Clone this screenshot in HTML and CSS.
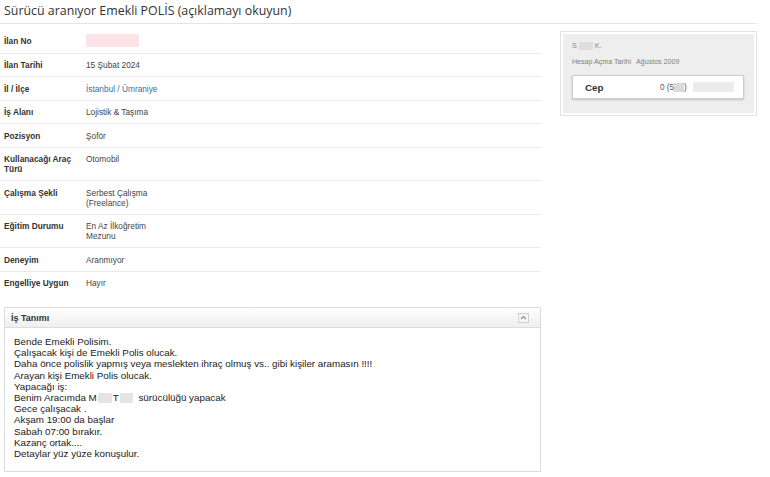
FILE: index.html
```html
<!DOCTYPE html>
<html lang="tr">
<head>
<meta charset="utf-8">
<link rel="stylesheet" href="styles.css">
</head>
<body>
<div class="page">
  <h1 class="title">Sürücü aranıyor Emekli POLİS (açıklamayı okuyun)</h1>
  <div class="content">
    <div class="main">
      <ul class="info">
        <li class="row"><span class="label">İlan No</span><span class="value"><span class="redact-pink"></span></span></li>
        <li class="row"><span class="label">İlan Tarihi</span><span class="value">15 Şubat 2024</span></li>
        <li class="row"><span class="label">İl / İlçe</span><span class="value link">İstanbul / Ümraniye</span></li>
        <li class="row"><span class="label">İş Alanı</span><span class="value">Lojistik &amp; Taşıma</span></li>
        <li class="row"><span class="label">Pozisyon</span><span class="value">Şoför</span></li>
        <li class="row"><span class="label">Kullanacağı Araç Türü</span><span class="value">Otomobil</span></li>
        <li class="row"><span class="label">Çalışma Şekli</span><span class="value">Serbest Çalışma<br>(Freelance)</span></li>
        <li class="row"><span class="label">Eğitim Durumu</span><span class="value">En Az İlkoğretim<br>Mezunu</span></li>
        <li class="row"><span class="label">Deneyim</span><span class="value">Aranmıyor</span></li>
        <li class="row last"><span class="label">Engelliye Uygun</span><span class="value">Hayır</span></li>
      </ul>
      <section class="desc">
        <header class="desc-head">
          <span class="desc-title">İş Tanımı</span>
          <span class="collapse"><svg width="7" height="5" viewBox="0 0 7 5"><path d="M1 4 L3.5 1.5 L6 4" fill="none" stroke="#8a8a8a" stroke-width="1.1"/></svg></span>
        </header>
        <div class="desc-body">
          <p>Bende Emekli Polisim.</p>
          <p>Çalışacak kişi de Emekli Polis olucak.</p>
          <p>Daha önce polislik yapmış veya meslekten ihraç olmuş vs.. gibi kişiler aramasın !!!!</p>
          <p>Arayan kişi Emekli Polis olucak.</p>
          <p>Yapacağı iş:</p>
          <p>Benim Aracımda M<span class="blur b1"></span>T<span class="blur b2"></span> sürücülüğü yapacak</p>
          <p>Gece çalışacak .</p>
          <p>Akşam 19:00 da başlar</p>
          <p>Sabah 07:00 bırakır.</p>
          <p>Kazanç ortak....</p>
          <p>Detaylar yüz yüze konuşulur.</p>
        </div>
      </section>
    </div>
    <aside class="side">
      <div class="side-inner">
        <div class="owner">S<span class="blur b3"></span>K.</div>
        <div class="since"><span>Hesap Açma Tarihi</span><span class="since-val">Ağustos 2009</span></div>
        <div class="phone">
          <span class="phone-label">Cep</span>
          <span class="phone-num">0 (5<span class="blur b4"></span>)</span>
          <span class="blur b5"></span>
        </div>
      </div>
    </aside>
  </div>
</div>
</body>
</html>
```

FILE: styles.css
```css
* { box-sizing: border-box; }
html, body { margin: 0; padding: 0; background: #fff; }
body { font-family: "Liberation Sans", Arial, sans-serif; color: #333; }

.page { width: 757px; }

.title {
  margin: 0;
  padding: 2px 4px 0;
  height: 24px;
  font-family: "Open Sans", "Liberation Sans", sans-serif;
  font-weight: 400;
  font-size: 12.4px;
  line-height: 18px;
  color: #333;
  border-bottom: 1px solid #e4e4e4;
}

.content { display: flex; align-items: flex-start; }

.main { width: 541px; flex: none; }

.info { list-style: none; margin: 5px 0 0; padding: 0; }
.row {
  display: flex;
  padding: 6.5px 0 6px 4px;
  border-bottom: 1px solid #ebebeb;
  font-size: 8.3px;
  line-height: 10px;
}
.row.last { border-bottom: none; }
.label { width: 82px; flex: none; font-weight: 700; color: #333; padding-right: 6px; }
.value { color: #444; }
.link { color: #3f6c9a; }
.redact-pink { display: inline-block; width: 53px; height: 13px; background: #fbe3e7; vertical-align: -3px; margin-top: -2px; }

.desc { margin: 13px 0 0 4px; border: 1px solid #dcdcdc; }
.desc-head {
  display: flex; align-items: center; justify-content: space-between;
  height: 20px; padding: 0 11px 0 6px;
  background: linear-gradient(#fefefe, #efefef);
  border-bottom: 1px solid #dcdcdc;
}
.desc-title { font-weight: 700; font-size: 9px; color: #333; }
.collapse {
  width: 11px; height: 10px; border: 1px solid #cfcfcf; background: #f7f7f7;
  display: flex; align-items: center; justify-content: center;
}
.desc-body { padding: 8px 9px 12px; font-size: 9.8px; line-height: 11.2px; color: #222; }
.desc-body p { margin: 0; }

.blur { display: inline-block; background: #e4e4e4; height: 10px; vertical-align: -2px; }
.b1 { width: 14px; margin: 0 1px; }
.b2 { width: 13px; margin: 0 3px 0 1px; }
.b3 { width: 14px; height: 8px; margin: 0 2px; background: #dedede; }
.b4 { width: 10px; height: 9px; background: #dadada; }
.b5 { width: 41px; height: 10px; margin-left: 6px; background: #ececec; }

.side {
  margin: 7px 0 0 19px;
  width: 197px; flex: none;
  border: 1px solid #e2e2e2;
  padding: 2px;
}
.side-inner { background: #eeeeee; padding: 7px 10px 14px 9px; }
.owner { font-size: 7.2px; color: #888; line-height: 10px; }
.since { font-size: 7.1px; color: #808080; margin-top: 6px; line-height: 10px; }
.since-val { margin-left: 5px; }
.phone {
  margin-top: 8px;
  background: #fff;
  border: 1px solid #cdcdcd;
  box-shadow: 0 1px 2px rgba(0,0,0,0.18);
  height: 24px;
  display: flex; align-items: center;
  padding: 0 6px 0 12px;
}
.phone-label { font-weight: 700; font-size: 9.8px; color: #333; width: 75px; }
.phone-num { font-size: 8.2px; color: #555; }
```
